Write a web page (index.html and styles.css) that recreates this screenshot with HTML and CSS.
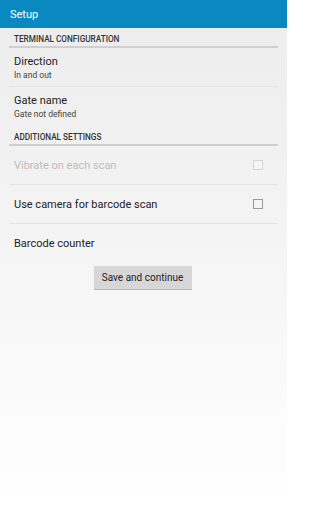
FILE: index.html
```html
<!DOCTYPE html>
<html>
<head>
<meta charset="utf-8">
<link rel="stylesheet" href="styles.css">
</head>
<body>
<div class="screen">
  <header class="appbar">Setup</header>
  <main class="content">
    <div class="category">TERMINAL CONFIGURATION</div>
    <div class="pref two-line">
      <div class="title">Direction</div>
      <div class="summary">In and out</div>
    </div>
    <div class="pref two-line no-border">
      <div class="title">Gate name</div>
      <div class="summary">Gate not defined</div>
    </div>
    <div class="category">ADDITIONAL SETTINGS</div>
    <div class="pref check disabled">
      <div class="title">Vibrate on each scan</div>
      <span class="box"></span>
    </div>
    <div class="pref check">
      <div class="title">Use camera for barcode scan</div>
      <span class="box"></span>
    </div>
    <div class="pref single no-border">
      <div class="title">Barcode counter</div>
    </div>
    <div class="actions">
      <button class="btn">Save and continue</button>
    </div>
  </main>
</div>
</body>
</html>
```
FILE: styles.css
```css
html, body {
  margin: 0;
  padding: 0;
  background: #fff;
}
body {
  font-family: Roboto, "Liberation Sans", sans-serif;
  overflow: hidden;
}
.screen {
  width: 287px;
  height: 512px;
  background: linear-gradient(#ececec 0%, #f3f3f3 40%, #ffffff 100%);
  display: flex;
  flex-direction: column;
}
.appbar {
  height: 28px;
  background: #0a89c1;
  color: #fff;
  font-size: 11px;
  padding-left: 10px;
  display: flex;
  align-items: center;
  box-sizing: border-box;
}
.content {
  padding: 0 9px;
}
.category {
  font-size: 8.2px;
  font-weight: 500;
  color: #333;
  padding: 6px 5px 0;
  height: 20px;
  line-height: 10px;
  box-sizing: border-box;
  border-bottom: 2px solid #cfcfcf;
}
.pref {
  border-bottom: 1px solid #e3e3e3;
  padding: 0 5px;
  box-sizing: border-box;
}
.pref.no-border {
  border-bottom: none;
}
.two-line {
  height: 39px;
  padding-top: 7px;
}
.title {
  font-size: 11px;
  color: #222;
  line-height: 13px;
}
.summary {
  font-size: 8.5px;
  color: #444;
  line-height: 12px;
  margin-top: 1px;
}
.check {
  height: 39px;
  display: flex;
  align-items: center;
  justify-content: space-between;
  padding-right: 15px;
}
.check.disabled .title {
  color: #bdbdbd;
}
.box {
  width: 8px;
  height: 8px;
  border: 1px solid #9a9a9a;
  background: #f4f4f4;
}
.check.disabled .box {
  border-color: #d6d6d6;
}
.single {
  height: 39px;
  display: flex;
  align-items: center;
}
.actions {
  display: flex;
  justify-content: center;
  padding-top: 3px;
}
.btn {
  font-family: Roboto, "Liberation Sans", sans-serif;
  font-size: 10px;
  color: #222;
  background: #d7d7d7;
  border: none;
  border-bottom: 1px solid #b5b5b5;
  width: 98px;
  height: 24px;
  padding: 0;
  margin-left: -2px;
}
```
